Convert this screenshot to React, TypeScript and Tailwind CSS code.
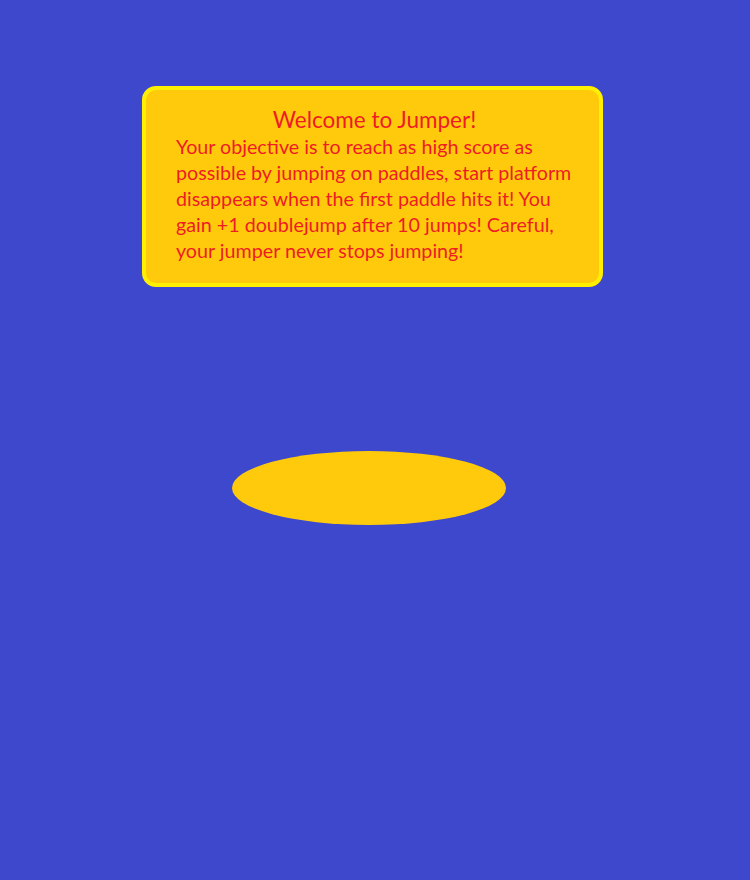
export default function App() {
  const lines = [
    "Your objective is to reach as high score as",
    "possible by jumping on paddles, start platform",
    "disappears when the first paddle hits it! You",
    "gain +1 doublejump after 10 jumps! Careful,",
    "your jumper never stops jumping!",
  ];
  return (
    <div className="w-[750px] h-[880px] bg-[#3e48cc] flex flex-col items-center" style={{ fontFamily: "Lato, 'Open Sans', sans-serif" }}>
      <div className="mt-[86px] ml-[-5px] w-[461px] h-[201px] rounded-[14px] border-4 border-[#ffef00] bg-[#ffca0c] text-[#ee1c24] pl-[30px] pr-[20px] pt-[16px]">
        <div className="text-center text-[22.5px] leading-[28px] pr-[6px]">Welcome to Jumper!</div>
        <div className="text-[19.7px] leading-[26px]">
          {lines.map((l) => (
            <div key={l} className="whitespace-nowrap">{l}</div>
          ))}
        </div>
      </div>
      <div className="mt-[164px] ml-[-12px] w-[274px] h-[74px] rounded-[50%] bg-[#ffca0c]" />
    </div>
  );
}
